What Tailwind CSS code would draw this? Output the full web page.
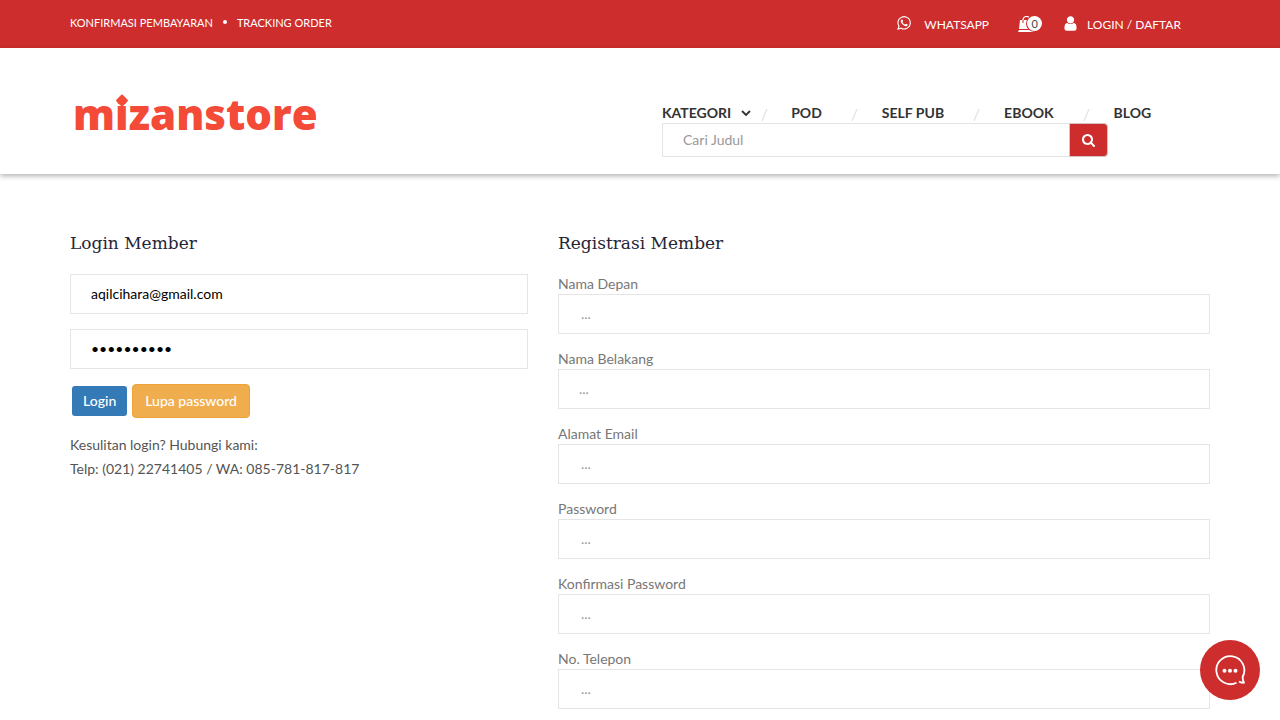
<!DOCTYPE html>
<html lang="id">
<head>
<meta charset="utf-8">
<meta name="viewport" content="width=device-width, initial-scale=1">
<title>Mizanstore - Login</title>
<script src="https://cdn.jsdelivr.net/npm/@tailwindcss/browser@4"></script>
</head>
<body class="h-screen overflow-x-hidden bg-white font-['Lato',sans-serif] text-sm text-[#777777]">

<div class="h-12 bg-[#ce2d2d] text-white">
  <div class="mx-auto flex h-full max-w-[1140px] items-center justify-between">
    <ul class="flex items-center gap-[10px] pb-[2px] text-[11px]">
      <li><a href="#">KONFIRMASI PEMBAYARAN</a></li>
      <li class="size-1 rounded-full bg-white mb-[2px]"></li>
      <li><a href="#">TRACKING ORDER</a></li>
    </ul>
    <div class="flex items-center pr-[29px] text-xs">
      <a href="#" class="flex items-center gap-3">
        <svg class="mb-[2px] size-4 fill-current" viewBox="0 0 1792 1792"><path d="M1113 974q13 0 97.5 44t89.5 53q2 5 2 15 0 33-17 76-16 39-71 65.5t-102 26.5q-57 0-190-62-98-45-170-118t-148-185q-72-107-71-194v-8q3-91 74-158 24-22 52-22 6 0 18 1.5t19 1.5q19 0 26.5 6.5t15.5 27.5q8 20 33 88t25 75q0 21-34.5 57.5t-34.5 46.5q0 7 5 15 34 73 102 137 56 53 151 101 12 7 22 7 15 0 54-48.5t52-48.5zm-203 530q127 0 243.5-50t200.5-134 134-200.5 50-243.5-50-243.5-134-200.5-200.5-134-243.5-50-243.5 50-200.5 134-134 200.5-50 243.5q0 203 120 368l-79 233 242-77q158 104 345 104zm0-1382q153 0 292.5 60t240.5 161 161 240.5 60 292.5-60 292.5-161 240.5-240.5 161-292.5 60q-195 0-365-94l-417 134 136-405q-108-178-108-389 0-153 60-292.5t161-240.5 240.5-161 292.5-60z"/></svg>
        <span class="pt-[2px]">WHATSAPP</span>
      </a>
      <a href="#" class="relative ml-[29px] block h-4 w-6" aria-label="Keranjang">
        <svg class="absolute left-0 top-0 h-4 w-[18px]" viewBox="0 0 18 16" fill="none"><path d="M2 4h14l1 9H1z" fill="#fff"/><path d="M1 14h16v2H0z" fill="#fff"/><path d="M5 7V4a3.600 3.600 0 0 1 7.200 0v3" stroke="#ce2d2d" stroke-width="1"/><path d="M5 4a3.600 3.600 0 0 1 7.200 0" stroke="#fff" stroke-width="1.300"/></svg>
        <span class="absolute right-0 top-0 flex size-[15px] items-center justify-center rounded-full bg-white text-[11px] leading-none text-[#444444] ring-1 ring-[#ce2d2d]">0</span>
      </a>
      <a href="#" class="ml-5 flex items-center gap-2">
        <svg class="mb-[2px] size-[17px] fill-current" viewBox="0 0 1792 1792"><path d="M1536 1399q0 109-62.5 187t-150.5 78h-854q-88 0-150.5-78t-62.5-187q0-85 8.500-160.5t31.500-152 58.500-131 94-89 134.500-34.500q131 128 313 128t313-128q76 0 134.500 34.500t94 89 58.500 131 31.500 152 8.500 160.500zm-256-887q0 159-112.500 271.500t-271.500 112.500-271.500-112.500-112.500-271.500 112.500-271.500 271.500-112.500 271.500 112.500 112.500 271.500z"/></svg>
        <span class="pt-[2px]">LOGIN / DAFTAR</span>
      </a>
    </div>
  </div>
</div>

<header class="h-[126px] bg-white shadow-[0_2px_5px_rgba(0,0,0,0.3)]">
  <div class="mx-auto flex max-w-[1140px] items-start justify-between">
    <a href="#" class="mt-10 ml-[3px] block font-['Open_Sans',sans-serif] text-[42px] leading-[52px] font-extrabold text-[#f44a38]">m<span class="relative">i<span class="absolute top-[11px] left-1/2 size-[9px] -translate-x-1/2 rotate-45 rounded-[1px] bg-[#f44a38]"></span></span>zanstore</a>
    <div class="w-[548px] pt-[55px]">
      <nav class="flex h-5 items-center text-sm font-bold text-[#333333]">
        <a href="#" class="flex items-center gap-[10px]">KATEGORI
          <svg class="size-[10px]" viewBox="0 0 10 10" fill="none" stroke="currentColor" stroke-width="1.800"><path d="M1 3l4 4 4-4"/></svg>
        </a>
        <svg class="mx-[10px] mt-1 h-3 w-[7px]" viewBox="0 0 7 12" fill="none" stroke="#e5e5e5" stroke-width="1.400"><path d="M1 12L6 0"/></svg>
        <a href="#" class="ml-[13px]">POD</a>
        <svg class="mt-1 ml-[29px] mr-6 h-3 w-[7px]" viewBox="0 0 7 12" fill="none" stroke="#e5e5e5" stroke-width="1.400"><path d="M1 12L6 0"/></svg>
        <a href="#">SELF PUB</a>
        <svg class="mt-1 ml-[29px] mr-6 h-3 w-[7px]" viewBox="0 0 7 12" fill="none" stroke="#e5e5e5" stroke-width="1.400"><path d="M1 12L6 0"/></svg>
        <a href="#">EBOOK</a>
        <svg class="mt-1 ml-[29px] mr-6 h-3 w-[7px]" viewBox="0 0 7 12" fill="none" stroke="#e5e5e5" stroke-width="1.400"><path d="M1 12L6 0"/></svg>
        <a href="#">BLOG</a>
      </nav>
      <form class="flex h-[34px] w-[446px]">
        <input type="text" aria-label="Cari Judul" placeholder="Cari Judul" class="min-w-0 flex-1 border border-r-0 border-[#e5e5e5] px-5 text-sm outline-none placeholder:text-[#999999]">
        <button type="button" aria-label="Cari" class="flex w-[39px] items-center justify-center rounded-r border border-[#d6c4c4] bg-[#ce2d2d] text-white">
          <svg class="size-[13px] fill-current" viewBox="0 128 1664 1664"><path d="M1152 832q0-185-131.500-316.500t-316.500-131.500-316.500 131.500-131.500 316.500 131.500 316.500 316.500 131.500 316.500-131.500 131.500-316.500zm512 832q0 52-38 90t-90 38q-54 0-90-38l-343-342q-179 124-399 124-143 0-273.500-55.500t-225-150-150-225-55.500-273.500 55.500-273.500 150-225 225-150 273.500-55.500 273.500 55.500 225 150 150 225 55.500 273.500q0 220-124 399l343 343q37 37 37 90z"/></svg>
        </button>
      </form>
    </div>
  </div>
</header>

<main class="mx-auto grid max-w-[1140px] grid-cols-[458fr_652fr] gap-[30px] pt-[57px]">
  <section>
    <h3 class="mb-[19px] font-['DejaVu_Serif',serif] text-[17px] leading-6 text-[#252537]">Login Member</h3>
    <form>
      <input type="email" aria-label="Email" value="aqilcihara@gmail.com" class="mb-[15px] block h-10 w-full border border-[#e5e5e5] px-5 pb-[2px] text-sm text-black outline-none">
      <input type="password" aria-label="Password" value="abcdefghij" class="mb-[15px] block h-10 w-full border border-[#e5e5e5] px-5 pb-[2px] text-sm text-black outline-none">
      <div class="flex items-center gap-[5px] pl-[2px] text-sm font-medium text-white">
        <button type="button" class="h-[30px] rounded-[3px] bg-[#337ab7] px-[11px]">Login</button>
        <button type="button" class="h-[34px] rounded border border-[#eea236] bg-[#f0ad4e] px-3">Lupa password</button>
      </div>
    </form>
    <p class="mt-[15px] leading-6 text-[#555555]">Kesulitan login? Hubungi kami:<br>Telp: (021) 22741405 / WA: 085-781-817-817</p>
  </section>
  <section>
    <h3 class="mb-[19px] font-['DejaVu_Serif',serif] text-[17px] leading-6 text-[#252537]">Registrasi Member</h3>
    <form class="flex flex-col gap-[15px]">
      <div><label for="nd" class="block h-5 leading-5">Nama Depan</label><input id="nd" type="text" placeholder="..." class="block h-10 w-full border border-[#e5e5e5] pr-5 pb-[2px] pl-[22px] outline-none placeholder:text-[#999999]"></div>
      <div><label for="nb" class="block h-5 leading-5">Nama Belakang</label><input id="nb" type="text" placeholder="..." class="block h-10 w-full border border-[#e5e5e5] px-5 pb-[2px] outline-none placeholder:text-[#999999]"></div>
      <div><label for="em" class="block h-5 leading-5">Alamat Email</label><input id="em" type="email" placeholder="..." class="block h-10 w-full border border-[#e5e5e5] pr-5 pb-[2px] pl-[22px] outline-none placeholder:text-[#999999]"></div>
      <div><label for="pw" class="block h-5 leading-5">Password</label><input id="pw" type="password" placeholder="..." class="block h-10 w-full border border-[#e5e5e5] pr-5 pb-[2px] pl-[22px] outline-none placeholder:text-[#999999]"></div>
      <div><label for="kp" class="block h-5 leading-5">Konfirmasi Password</label><input id="kp" type="password" placeholder="..." class="block h-10 w-full border border-[#e5e5e5] pr-5 pb-[2px] pl-[22px] outline-none placeholder:text-[#999999]"></div>
      <div><label for="tl" class="block h-5 leading-5">No. Telepon</label><input id="tl" type="tel" placeholder="..." class="block h-10 w-full border border-[#e5e5e5] pr-5 pb-[2px] pl-[22px] outline-none placeholder:text-[#999999]"></div>
    </form>
  </section>
</main>

<button type="button" aria-label="Chat" class="fixed right-5 bottom-5 flex size-[60px] items-center justify-center rounded-full bg-[#ce2d2d]">
  <svg class="size-8" viewBox="0 0 32 32" fill="none"><path d="M22.500 28.700A14 14 0 1 1 28.800 22.500Q28.300 25.500 30 28.700Q27 29 25 27.500" stroke="#fff" stroke-width="1.800" stroke-linejoin="round"/><circle cx="10.500" cy="16.700" r="2" fill="#fff"/><circle cx="16" cy="16.700" r="2" fill="#fff"/><circle cx="21.500" cy="16.700" r="2" fill="#fff"/></svg>
</button>
</body>
</html>
